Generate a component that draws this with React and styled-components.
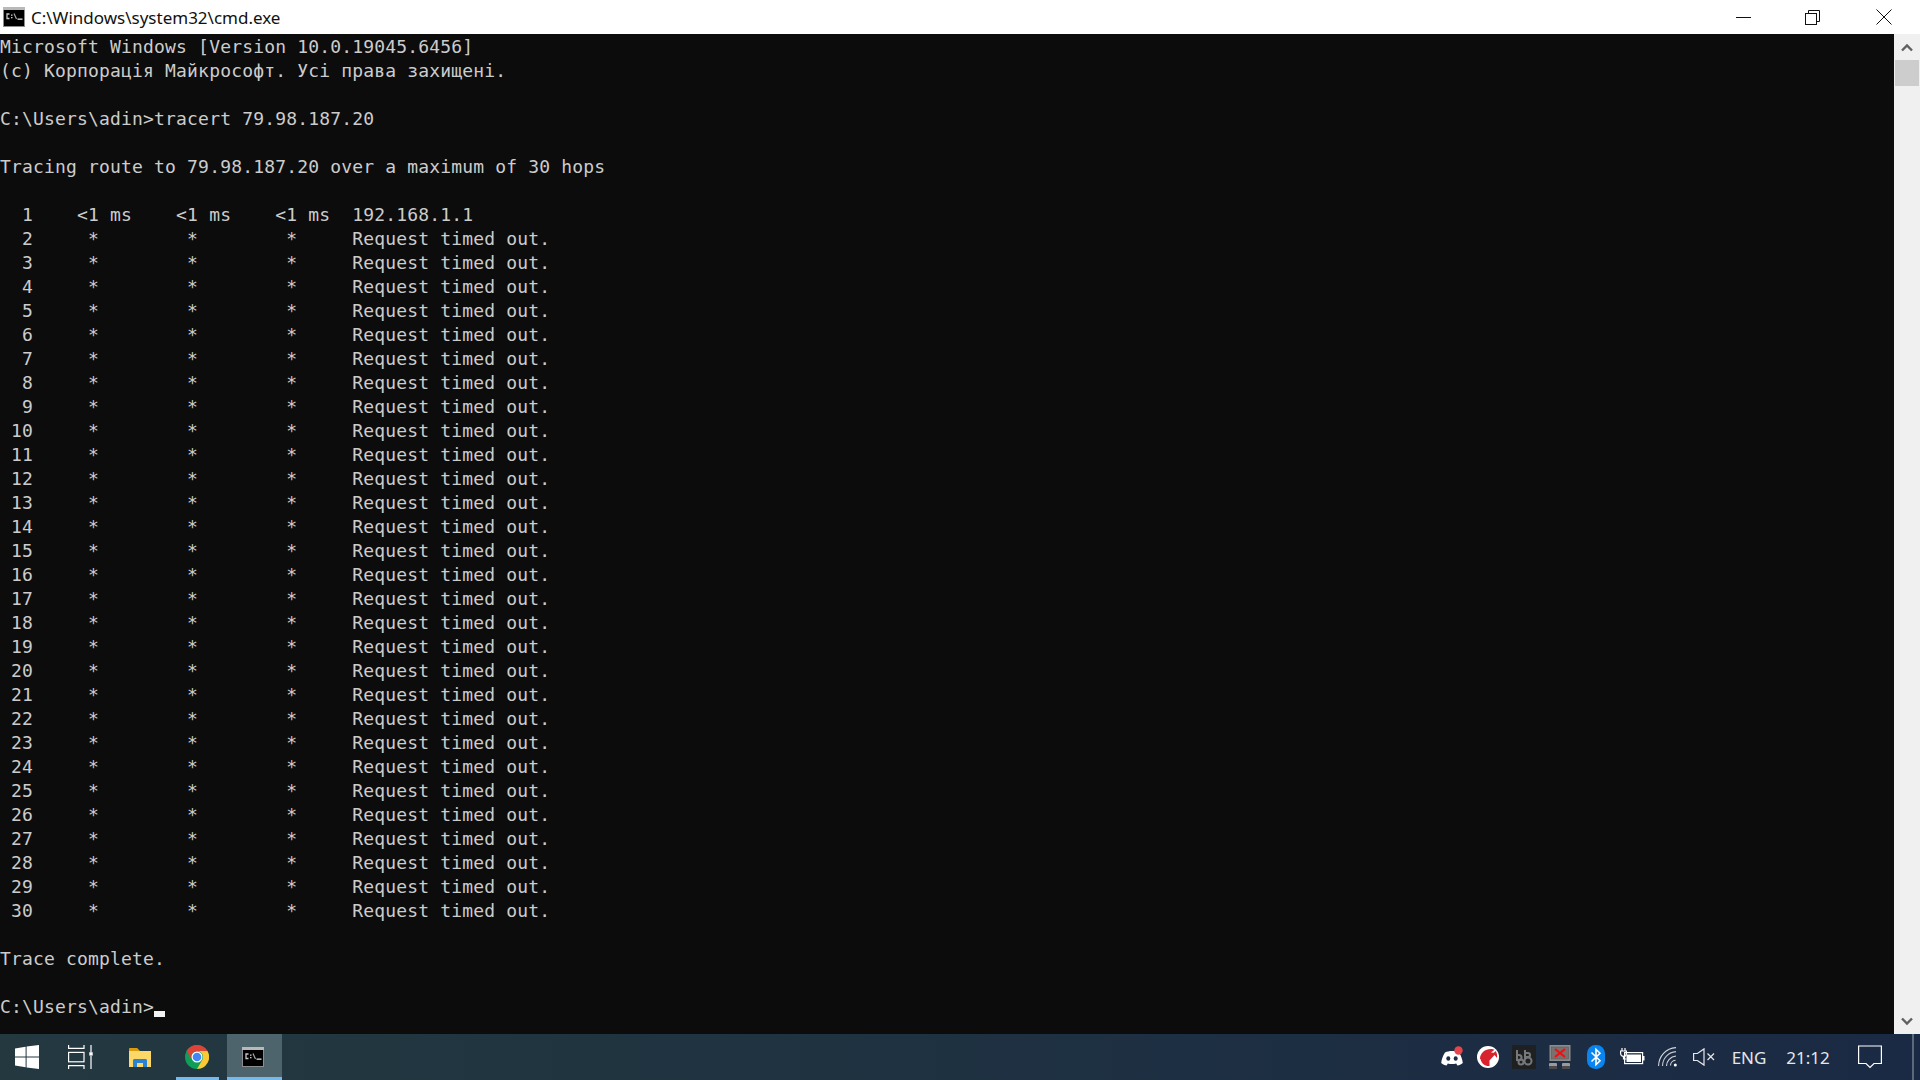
import React from "react";
import styled, { createGlobalStyle } from "styled-components";

const GlobalStyle = createGlobalStyle`
  html, body {
    margin: 0;
    padding: 0;
    height: 100%;
    overflow: hidden;
    background: #0c0c0c;
  }
`;

const Screen = styled.div`
  width: 1920px;
  height: 1080px;
  display: flex;
  flex-direction: column;
`;

const TitleBar = styled.div`
  height: 34px;
  flex: none;
  display: flex;
  align-items: center;
  background: #fff;
  padding-left: 3px;
`;

const TitleText = styled.span`
  margin-left: 6px;
  font-family: "Noto Sans", sans-serif;
  font-size: 17px;
  color: #111;
  flex: 1;
`;

const WindowButton = styled.div`
  width: ${(p) => p.$w}px;
  height: 34px;
  display: flex;
  align-items: center;
  justify-content: center;
`;

const Body = styled.div`
  flex: 1;
  display: flex;
  min-height: 0;
`;

const Console = styled.pre`
  flex: 1;
  margin: 0;
  padding: 1px 0 0;
  background: #0c0c0c;
  color: #cccccc;
  font-family: "DejaVu Sans Mono", "Liberation Mono", monospace;
  font-size: 18px;
  letter-spacing: 0.17px;
  line-height: 24px;
  overflow: hidden;
`;

const Cursor = styled.span`
  display: inline-block;
  width: 11px;
  height: 6px;
  background: #f2f2f2;
  vertical-align: -4px;
`;

const Scrollbar = styled.div`
  width: 26px;
  flex: none;
  background: #f0f0f0;
  display: flex;
  flex-direction: column;
  align-items: center;
`;

const ScrollArrow = styled.div`
  width: 26px;
  height: 26px;
  flex: none;
  display: flex;
  align-items: center;
  justify-content: center;
`;

const ScrollTrack = styled.div`
  flex: 1;
  width: 100%;
  padding: 0 1px;
  box-sizing: border-box;
`;

const ScrollThumb = styled.div`
  height: 26px;
  background: #cdcdcd;
`;

const Taskbar = styled.div`
  height: 46px;
  flex: none;
  display: flex;
  align-items: stretch;
  background: linear-gradient(90deg, #23383f 0%, #21363f 20%, #1c2d43 75%, #1b2a44 100%);
`;

const TaskSlot = styled.div`
  position: relative;
  box-sizing: border-box;
  width: ${(p) => p.$w}px;
  margin-left: ${(p) => p.$ml || 0}px;
  padding-right: ${(p) => p.$pr || 0}px;
  flex: none;
  display: flex;
  align-items: center;
  justify-content: center;
  background: ${(p) => (p.$active ? "#4d646c" : "transparent")};
  ${(p) => p.$open && `
    &::after {
      content: "";
      position: absolute;
      left: 0;
      right: 0;
      bottom: 0;
      height: 3px;
      background: #76b9ed;
    }
  `}
`;

const TraySpacer = styled.div`
  flex: 1;
`;

const TrayText = styled.div`
  width: ${(p) => p.$w}px;
  margin-left: ${(p) => p.$ml || 0}px;
  flex: none;
  display: flex;
  align-items: center;
  justify-content: center;
  font-family: "Noto Sans", sans-serif;
  font-size: 17px;
  color: #e4e7ea;
`;

const ShowDesktop = styled.div`
  width: 2px;
  margin-left: 20px;
  margin-right: 6px;
  flex: none;
  background: #5a6878;
`;

const CmdIcon = ({ size = 22 }) => (
  <svg width={size} height={size} viewBox="0 0 22 22">
    <rect x="0" y="1" width="22" height="20" fill="#8d8d8d" />
    <rect x="0" y="1" width="22" height="3" fill="#b9b9b9" />
    <rect x="1" y="4" width="20" height="16" fill="#000" />
    <path d="M6.500 8H4v4.500h2.500" fill="none" stroke="#c8c8c8" strokeWidth="1.300" />
    <rect x="8" y="8.500" width="1.500" height="1.300" fill="#c8c8c8" />
    <rect x="8" y="11" width="1.500" height="1.300" fill="#c8c8c8" />
    <path d="M11 7.500l2.500 5.500" stroke="#a8a8a8" strokeWidth="1.200" />
    <rect x="14.500" y="12.500" width="5" height="1.300" fill="#e0e0e0" />
  </svg>
);

const WindowsLogo = () => (
  <svg width="24" height="24" viewBox="0 0 24 24" fill="#fff">
    <polygon points="0,3.400 10.600,1.800 10.600,11.500 0,11.500" />
    <polygon points="11.600,1.600 24,0 24,11.500 11.600,11.500" />
    <polygon points="0,12.500 10.600,12.500 10.600,22.200 0,20.600" />
    <polygon points="11.600,12.500 24,12.500 24,24 11.600,22.400" />
  </svg>
);

const TaskViewIcon = () => (
  <svg width="26" height="24" viewBox="0 0 26 24" fill="none" stroke="#fff" strokeWidth="1.200">
    <path d="M0.600 0v3.400h15.400V0" />
    <rect x="0.600" y="7.400" width="15.400" height="9.400" />
    <path d="M0.600 24v-3.400h15.400V24" />
    <path d="M23 0v7M23 11v13" />
    <rect x="21.300" y="7.200" width="3.400" height="3.400" fill="#fff" stroke="none" />
  </svg>
);

const FolderIcon = () => (
  <svg width="22" height="19" viewBox="0 0 22 19">
    <path d="M0 1.200C0 .5.500 0 1.200 0h7L11 3v1H0z" fill="#dc9c0b" />
    <rect x="0" y="3" width="22" height="16" fill="#fcd868" />
    <path d="M4 19v-6.500C4 11.600 4.600 11 5.500 11h11c.9 0 1.500.6 1.500 1.500V19h-4v-4H8v4z" fill="#2a83d1" />
  </svg>
);

const ChromeIcon = () => (
  <svg width="24" height="24" viewBox="0 0 48 48">
    <circle cx="24" cy="24" r="24" fill="#0f9d58" />
    <path d="M3.200 12A24 24 0 0 1 44.800 12H24a12 12 0 0 0-11.400 15.600z" fill="#db4437" />
    <path d="M44.800 12A24 24 0 0 1 24 48l10.400-18A12 12 0 0 0 24 12z" fill="#fcc934" />
    <circle cx="24" cy="24" r="11" fill="#fff" />
    <circle cx="24" cy="24" r="8.600" fill="#4285f4" />
  </svg>
);

const DiscordIcon = () => (
  <svg width="24" height="22" viewBox="0 0 24 22">
    <path
      d="M5 6.500c4-2 10-2 14 0 2.200 3.400 3.400 7 3.800 10.400-1.800 1.400-3.600 2.200-5.400 2.600l-1.200-2c-2.800.8-5.600.8-8.400 0l-1.200 2C4.800 19.100 3 18.300 1.200 16.900 1.600 13.500 2.800 9.900 5 6.500z"
      fill="#fff"
    />
    <ellipse cx="8.300" cy="12.500" rx="2" ry="2.300" fill="#1c2d43" />
    <ellipse cx="15.700" cy="12.500" rx="2" ry="2.300" fill="#1c2d43" />
    <circle cx="18.500" cy="4.500" r="4.200" fill="#e8444a" />
  </svg>
);

const WotIcon = () => (
  <svg width="22" height="22" viewBox="0 0 22 22">
    <circle cx="11" cy="11" r="11" fill="#fff" />
    <path d="M3 13C3 7 8 3 14 3c1.500 0 2.500.3 3.500.8L14 6.500l3 .2L18.500 5c1.500 2 2 4.500 1.500 7l-2.500-3-5 5.500V20c-4 .5-8-2-9-7z" fill="#d8232f" />
  </svg>
);

const BoIcon = () => (
  <svg width="24" height="24" viewBox="0 0 24 24">
    <rect width="24" height="24" fill="#1f2022" />
    <g fill="none" stroke="#77787a" strokeWidth="2">
      <path d="M5 5v10h2a2.500 2.500 0 0 0 0-5H5" />
      <path d="M13 5v9" />
      <circle cx="9" cy="17" r="2.500" />
      <circle cx="16" cy="16" r="3.500" />
      <path d="M14 8h2a2 2 0 0 1 0 4h-2" />
    </g>
  </svg>
);

const NetworkAlertIcon = () => (
  <svg width="22" height="24" viewBox="0 0 22 24">
    <rect x="0.500" y="0" width="21" height="16" fill="#8b8b8b" />
    <rect x="2.500" y="2" width="17" height="12" fill="#7b6f6f" stroke="#555" strokeWidth="0.500" />
    <path d="M6 4l10 8M16 4L6 12" stroke="#f01010" strokeWidth="2.200" />
    <rect x="0" y="18" width="8" height="6" rx="1" fill="#9a9a9a" />
    <rect x="13" y="18" width="8" height="6" rx="1" fill="#9a9a9a" />
    <rect x="0" y="21" width="8" height="3" fill="#4a4a4a" />
    <rect x="13" y="21" width="8" height="3" fill="#4a4a4a" />
  </svg>
);

const BluetoothIcon = () => (
  <svg width="18" height="24" viewBox="0 0 18 24">
    <rect width="18" height="24" rx="8.500" fill="#0a84ef" />
    <path d="M4.500 7.500 13 15.800 9 19.700V4.300L13 8.200 4.500 16.500" fill="none" stroke="#fff" strokeWidth="1.600" />
  </svg>
);

const BatteryIcon = () => (
  <svg width="25" height="18" viewBox="0 0 25 18" fill="none" stroke="#fff" strokeWidth="1.200">
    <rect x="4.600" y="4.600" width="18" height="11" />
    <rect x="6.500" y="6.500" width="14.500" height="7.500" fill="#fff" stroke="none" />
    <rect x="23" y="8" width="1.500" height="4.500" fill="#fff" stroke="none" />
    <path d="M2 0v3M5 0v3M.6 3h5.800v2.500a2.900 2.900 0 0 1-5.800 0zM3.500 8.400V11h3" />
  </svg>
);

const WifiIcon = () => (
  <svg width="20" height="20" viewBox="0 0 20 20" fill="none" stroke="#d5d8dc" strokeWidth="1.100">
    <path d="M.6 19C.6 9 8 1.200 18 .6" />
    <path d="M4.500 19C4.500 11.500 10.500 5 18 4.600" opacity="0.900" />
    <path d="M8.500 19c0-5 4-9.500 9.500-10" />
    <path d="M12.500 18.500c0-2.500 2-5 5-5.300" />
    <circle cx="17.300" cy="18" r="1.500" fill="#fff" stroke="none" />
  </svg>
);

const VolumeMuteIcon = () => (
  <svg width="22" height="18" viewBox="0 0 22 18" fill="none" stroke="#e8e8e8" strokeWidth="1.200">
    <path d="M.6 5.500h3.800L11 .9v16.200L4.400 12.500H.6z" />
    <path d="M14.500 5.500l6.500 6.500M21 5.500L14.500 12" />
  </svg>
);

const NotificationIcon = () => (
  <svg width="24" height="24" viewBox="0 0 24 24" fill="none" stroke="#fff" strokeWidth="1.200">
    <path d="M.6 1h22.800v17.500H16l-4 4-4-4H.6z" />
  </svg>
);

const header = `Microsoft Windows [Version 10.0.19045.6456]
(c) Корпорація Майкрософт. Усі права захищені.

C:\\Users\\adin>tracert 79.98.187.20

Tracing route to 79.98.187.20 over a maximum of 30 hops

  1    <1 ms    <1 ms    <1 ms  192.168.1.1
`;

const hops = Array.from({ length: 29 }, (_, i) => i + 2)
  .map((n) => `${String(n).padStart(3, " ")}     *        *        *     Request timed out.`)
  .join("\n");

const App = () => {
  return (
    <Screen>
      <GlobalStyle />
      <TitleBar>
        <CmdIcon />
        <TitleText>C:\Windows\system32\cmd.exe</TitleText>
        <WindowButton $w={69}>
          <svg width="15" height="1" viewBox="0 0 15 1">
            <rect width="15" height="1" fill="#111" />
          </svg>
        </WindowButton>
        <WindowButton $w={69}>
          <svg width="15" height="15" viewBox="0 0 15 15" fill="none" stroke="#111">
            <path d="M3.500 3V.5h11v11H12" />
            <rect x="0.500" y="3.500" width="11" height="11" />
          </svg>
        </WindowButton>
        <WindowButton $w={73}>
          <svg width="16" height="16" viewBox="0 0 16 16" fill="none" stroke="#111">
            <path d="M.5.500l15 15M15.500.500l-15 15" />
          </svg>
        </WindowButton>
      </TitleBar>
      <Body>
        <Console>
          {header}
          {hops}
          {"\n\nTrace complete.\n\nC:\\Users\\adin>"}
          <Cursor />
        </Console>
        <Scrollbar>
          <ScrollArrow>
            <svg width="12" height="9" viewBox="0 0 12 9" fill="none" stroke="#606060" strokeWidth="2.400">
              <path d="M1 7.500l5-5 5 5" />
            </svg>
          </ScrollArrow>
          <ScrollTrack>
            <ScrollThumb />
          </ScrollTrack>
          <ScrollArrow>
            <svg width="12" height="9" viewBox="0 0 12 9" fill="none" stroke="#606060" strokeWidth="2.400">
              <path d="M1 1.500l5 5 5-5" />
            </svg>
          </ScrollArrow>
        </Scrollbar>
      </Body>
      <Taskbar>
        <TaskSlot $w={54}><WindowsLogo /></TaskSlot>
        <TaskSlot $w={54}><TaskViewIcon /></TaskSlot>
        <TaskSlot $w={64}><FolderIcon /></TaskSlot>
        <TaskSlot $w={43} $ml={4} $pr={1} $open><ChromeIcon /></TaskSlot>
        <TaskSlot $w={55} $ml={8} $pr={3} $active $open><CmdIcon /></TaskSlot>
        <TraySpacer />
        <TaskSlot $w={36}><DiscordIcon /></TaskSlot>
        <TaskSlot $w={36}><WotIcon /></TaskSlot>
        <TaskSlot $w={36}><BoIcon /></TaskSlot>
        <TaskSlot $w={36}><NetworkAlertIcon /></TaskSlot>
        <TaskSlot $w={36}><BluetoothIcon /></TaskSlot>
        <TaskSlot $w={36}><BatteryIcon /></TaskSlot>
        <TaskSlot $w={36}><WifiIcon /></TaskSlot>
        <TaskSlot $w={36}><VolumeMuteIcon /></TaskSlot>
        <TrayText $w={54}>ENG</TrayText>
        <TrayText $w={62} $ml={1}>21:12</TrayText>
        <TaskSlot $w={44} $ml={9}><NotificationIcon /></TaskSlot>
        <ShowDesktop />
      </Taskbar>
    </Screen>
  );
};

export default App;
